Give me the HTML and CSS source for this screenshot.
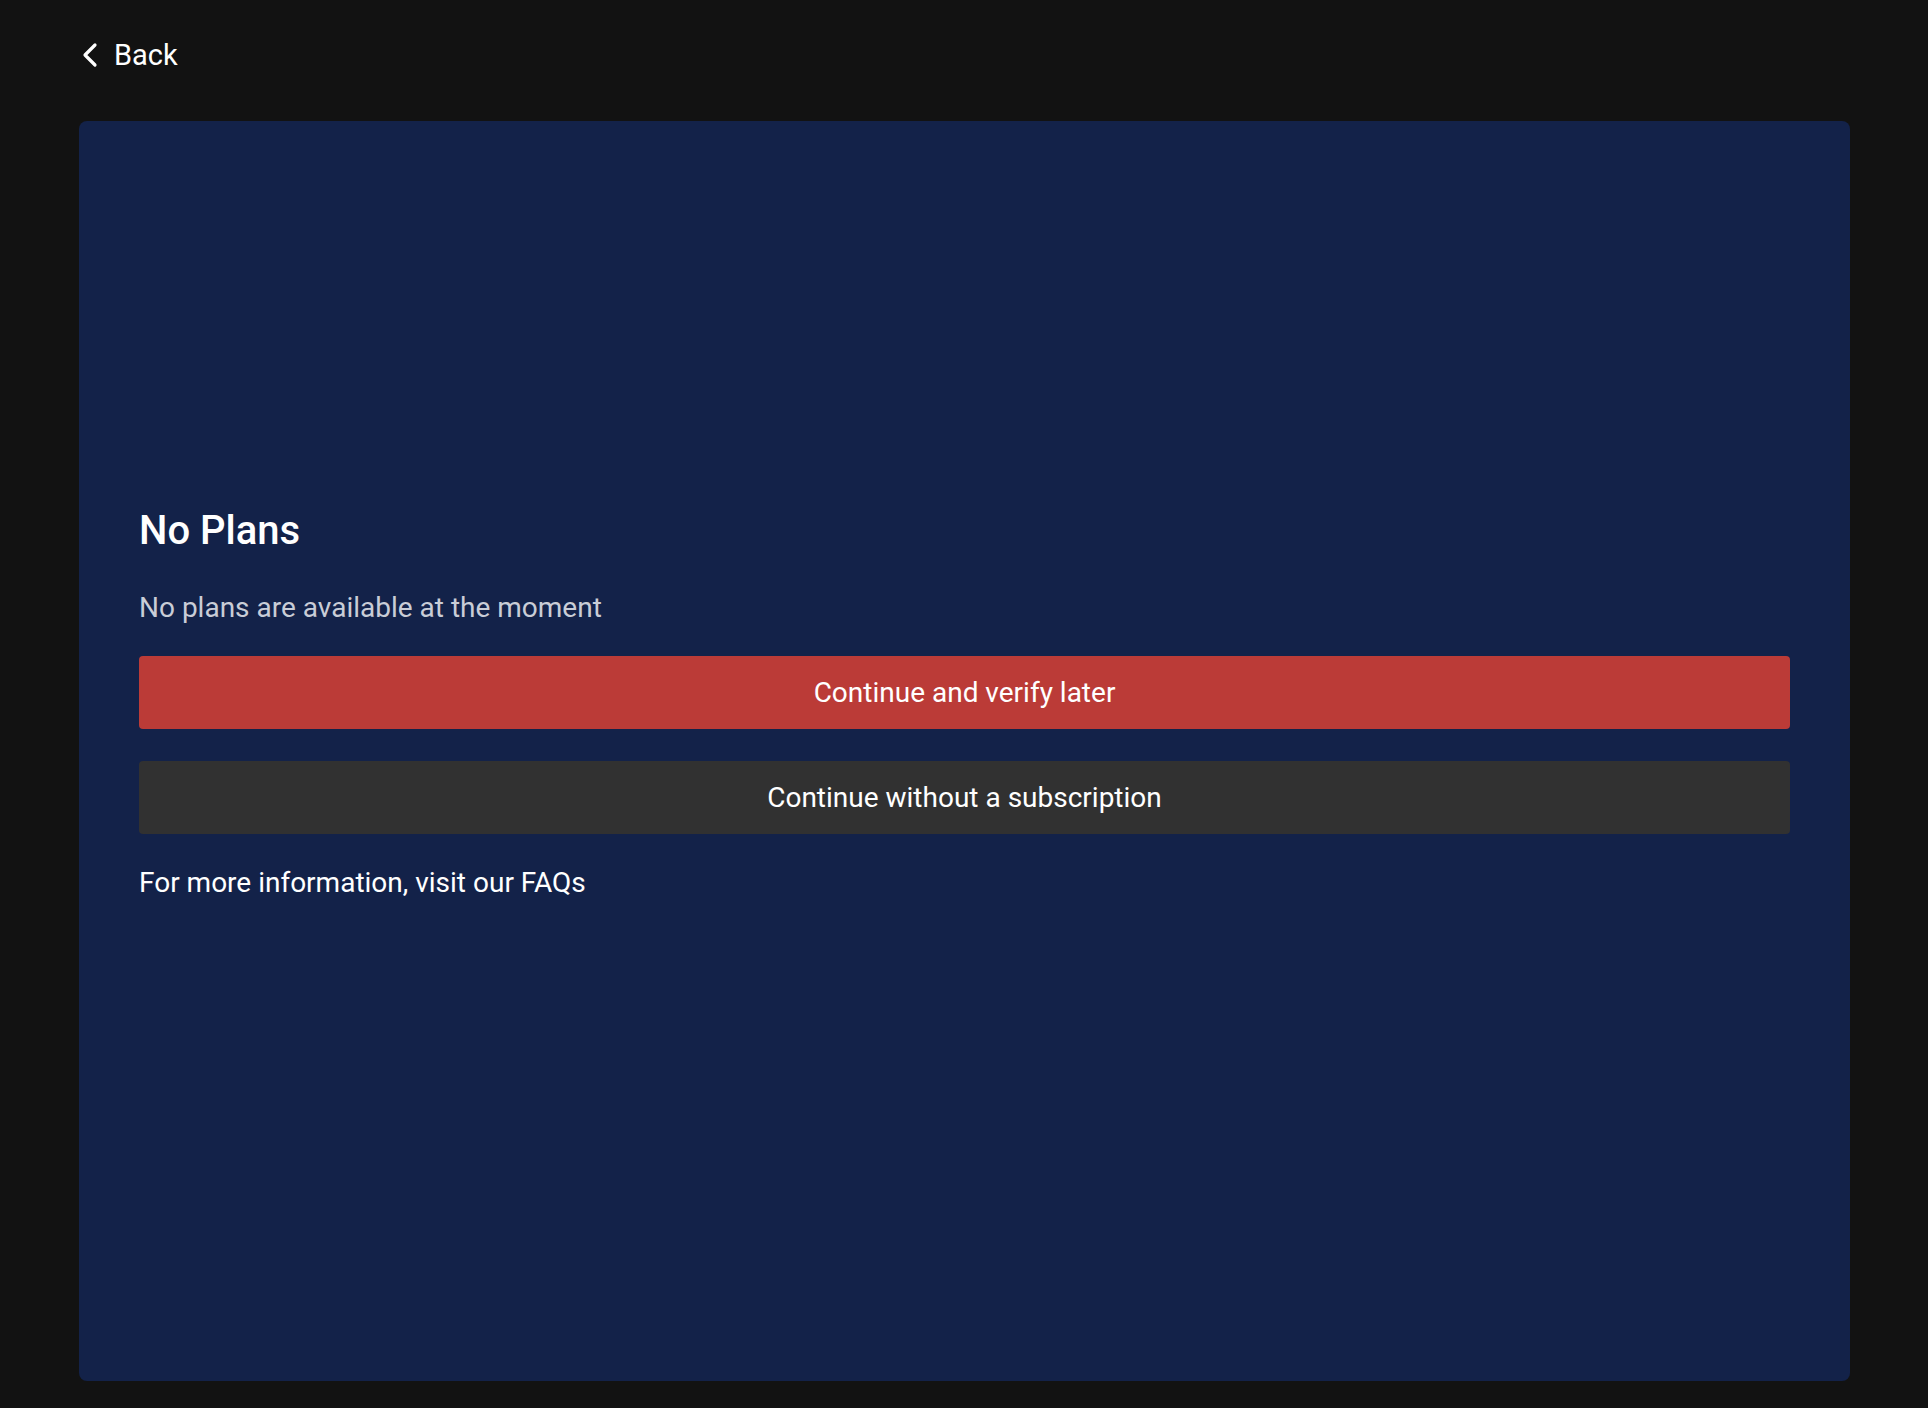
FILE: index.html
```html
<!DOCTYPE html>
<html lang="en">
<head>
<meta charset="utf-8">
<title>No Plans</title>
<link rel="stylesheet" href="styles.css">
</head>
<body>
<div class="page">
  <header class="topbar">
    <a class="back" href="#">
      <svg class="back-icon" width="18" height="26" viewBox="0 0 18 26" aria-hidden="true">
        <polyline points="14,3 4,13 14,23" fill="none" stroke="#ffffff" stroke-width="3.2" stroke-linecap="round" stroke-linejoin="round"/>
      </svg>
      <span>Back</span>
    </a>
  </header>
  <main class="card">
    <h1 class="title">No Plans</h1>
    <p class="subtitle">No plans are available at the moment</p>
    <div class="actions">
      <button class="btn btn-primary" type="button">Continue and verify later</button>
      <button class="btn btn-secondary" type="button">Continue without a subscription</button>
    </div>
    <p class="info">For more information, visit our FAQs</p>
  </main>
</div>
</body>
</html>
```

FILE: styles.css
```css
* {
  box-sizing: border-box;
}

html, body {
  margin: 0;
  padding: 0;
  background: #121212;
}

body {
  font-family: Roboto, "Liberation Sans", Arial, sans-serif;
  color: #ffffff;
}

.page {
  display: flex;
  flex-direction: column;
  min-height: 1408px;
  padding: 0 78px 27px 79px;
}

.topbar {
  height: 121px;
  display: flex;
  align-items: flex-start;
  padding-top: 38px;
}

.back {
  display: flex;
  align-items: center;
  gap: 15px;
  color: #ffffff;
  text-decoration: none;
  font-size: 29px;
  line-height: 34px;
  padding-left: 2px;
}

.back-icon {
  display: block;
}

.card {
  flex: 1;
  background: #132249;
  border-radius: 8px;
  padding: 386px 60px 0 60px;
  display: flex;
  flex-direction: column;
}

.title {
  margin: 0;
  font-size: 40px;
  line-height: 48px;
  font-weight: 500;
  color: #ffffff;
}

.subtitle {
  margin: 35px 0 0;
  font-size: 28px;
  line-height: 36px;
  color: #c9cdd7;
}

.actions {
  margin-top: 30px;
  display: flex;
  flex-direction: column;
  gap: 32px;
}

.btn {
  display: block;
  width: 100%;
  height: 73px;
  border: 0;
  border-radius: 4px;
  font-family: inherit;
  font-size: 28px;
  color: #ffffff;
  cursor: pointer;
}

.btn-primary {
  background: #bb3b37;
}

.btn-secondary {
  background: #313131;
}

.info {
  margin: 31px 0 0;
  font-size: 28px;
  line-height: 36px;
  color: #ffffff;
}
```
